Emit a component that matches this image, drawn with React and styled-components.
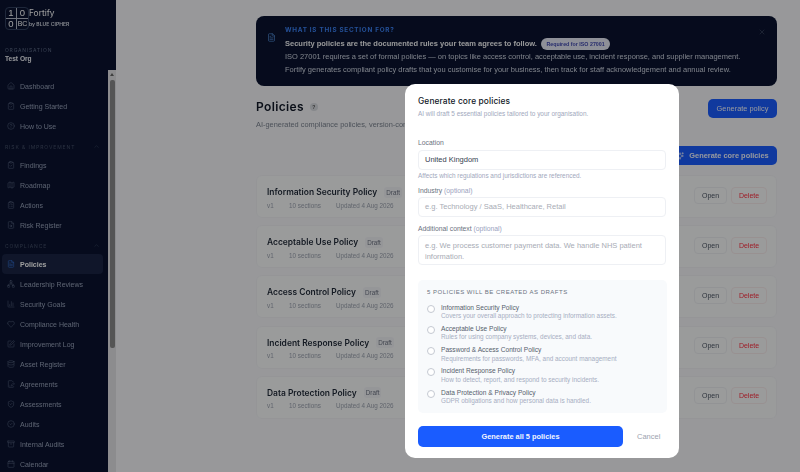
import React from 'react';
import styled, { createGlobalStyle } from 'styled-components';
import {
  Home, ClipboardCheck, CircleHelp, ChevronUp, Map, ClipboardList, FileSearch, FileText, Network,
  ChartColumn, Heart, SquarePen, Database, FileSignature, ShieldCheck, CircleCheck, Archive, Calendar,
  X, Sparkles,
} from 'lucide-react';

const GlobalStyle = createGlobalStyle`
  html, body { margin: 0; padding: 0; height: 100%; overflow: hidden; }
  body { font-family: "Liberation Sans", Arial, sans-serif; background: #f5f6f8; }
  * { box-sizing: border-box; }
`;

const Page = styled.div`
  display: flex;
  height: 472px;
  width: 800px;
  overflow: hidden;
`;

const Sidebar = styled.aside`
  width: 116px;
  flex-shrink: 0;
  background: #0a1330;
  display: flex;
  flex-direction: column;
  filter: blur(0.45px);
`;

const Brand = styled.div`
  display: flex;
  align-items: flex-start;
  gap: 0;
  padding: 7px 0 0 5px;
  height: 46px;
`;

const LogoGrid = styled.div`
  display: grid;
  grid-template-columns: 11px 11px;
  grid-template-rows: 11px 10px;
  width: 24px;
  height: 23px;
  border: 1px solid #33415f;
  border-radius: 4px;
  color: #fff;
  text-align: center;
  line-height: 10px;
`;

const LogoCell = styled.span`
  border-right: ${(p) => (p.$right ? '1px solid #b4bac8' : 'none')};
  border-bottom: ${(p) => (p.$bottom ? '1px solid #b4bac8' : 'none')};
  font-size: ${(p) => (p.$small ? '7px' : '9.5px')};
  font-weight: 500;
  white-space: nowrap;
`;

const BrandText = styled.div`
  display: flex;
  flex-direction: column;
  color: #fff;
  font-family: Inter, sans-serif;
`;

const BrandName = styled.span`
  font-size: 8.4px;
  line-height: 12px;
`;

const BrandSub = styled.span`
  margin-top: 1px;
  font-size: 5.1px;
  line-height: 8px;
  font-weight: 600;
  color: #d6dae4;
`;

const OrgBlock = styled.div`
  padding: 0 0 0 5px;
  height: 24px;
`;

const OrgLabel = styled.div`
  font-family: Inter, sans-serif;
  font-size: 5px;
  line-height: 8px;
  letter-spacing: 0.8px;
  color: #5f6b86;
`;

const OrgName = styled.div`
  font-size: 6.6px;
  line-height: 10px;
  font-weight: 700;
  color: #eef0f5;
`;

const SidebarBody = styled.div`
  flex: 1;
  display: flex;
  min-height: 0;
`;

const NavList = styled.nav`
  flex: 1;
  overflow: hidden;
  padding: 6px 5px 0 2px;
`;

const NavItem = styled.div`
  display: flex;
  align-items: center;
  gap: 5px;
  height: 20px;
  padding-left: 5px;
  border-radius: 4px;
  font-size: 7px;
  color: ${(p) => (p.$active ? '#ffffff' : '#97a1b8')};
  font-weight: ${(p) => (p.$active ? 700 : 400)};
  background: ${(p) => (p.$active ? '#1a2544' : 'transparent')};
  white-space: nowrap;

  svg {
    flex-shrink: 0;
    color: ${(p) => (p.$active ? '#3b82f6' : '#64708c')};
  }
`;

const NavSection = styled.div`
  display: flex;
  align-items: center;
  justify-content: space-between;
  height: 19px;
  padding: 2px 3px 0 3px;
  font-family: Inter, sans-serif;
  font-size: 5px;
  letter-spacing: 0.9px;
  color: #465069;
  white-space: nowrap;
`;

const ScrollTrack = styled.div`
  width: 8px;
  background: #e2e3e5;
  display: flex;
  flex-direction: column;
  align-items: center;
`;

const ScrollArrow = styled.div`
  width: 0;
  height: 0;
  margin: 3px 0 3px;
  border-left: 2.5px solid transparent;
  border-right: 2.5px solid transparent;
  border-bottom: 3px solid #666;
`;

const ScrollThumb = styled.div`
  width: 5px;
  height: 268px;
  margin-top: 1px;
  background: #8a8a8a;
  border-radius: 2px;
`;

const Main = styled.main`
  flex: 1;
  min-width: 0;
  padding: 16px 23px 0 140px;
  overflow: hidden;
  filter: blur(0.45px);
`;

const Banner = styled.section`
  display: flex;
  height: 70px;
  padding: 9px 10px 0 11px;
  background: #0a1330;
  border-radius: 8px;
  position: relative;
`;

const BannerIcon = styled.div`
  width: 16px;
  padding-top: 3px;
  color: #60a5fa;
  flex-shrink: 0;
`;

const BannerBody = styled.div`
  padding-left: 2px;
`;

const BannerEyebrow = styled.div`
  font-family: Inter, sans-serif;
  font-size: 6.3px;
  line-height: 10px;
  font-weight: 700;
  letter-spacing: 0.75px;
  color: #3b82f6;
`;

const BannerLead = styled.div`
  display: flex;
  align-items: center;
  gap: 4px;
  margin-top: 2px;
  height: 13px;
  font-size: 7.5px;
  font-weight: 700;
  color: #f3f4f6;
`;

const RequiredPill = styled.span`
  height: 12px;
  padding: 0 5.5px;
  border-radius: 6px;
  background: #e6e9f5;
  color: #3f48b0;
  font-size: 5.3px;
  line-height: 12px;
  font-weight: 700;
`;

const BannerText = styled.p`
  margin: 1px 0 0;
  font-size: 7.47px;
  line-height: 12.5px;
  color: #cdd3df;
  white-space: nowrap;
`;

const BannerClose = styled.div`
  position: absolute;
  top: 12px;
  right: 11px;
  color: #525c75;
  display: flex;
`;

const Header = styled.header`
  display: flex;
  justify-content: space-between;
  margin-top: 13px;
  height: 47px;
  align-items: flex-start;
`;

const TitleRow = styled.div`
  display: flex;
  align-items: center;
  gap: 6px;
`;

const Title = styled.h1`
  margin: 0;
  font-family: Inter, sans-serif;
  font-size: 12px;
  line-height: 16px;
  font-weight: 600;
  letter-spacing: 0.35px;
  color: #111827;
`;

const HelpDot = styled.span`
  width: 8px;
  height: 8px;
  border-radius: 50%;
  background: #d8dbe1;
  color: #555;
  font-size: 5px;
  line-height: 8px;
  text-align: center;
  font-weight: 700;
`;

const Subtitle = styled.p`
  margin: 5px 0 0;
  font-size: 7.4px;
  line-height: 10px;
  color: #7b8290;
  white-space: nowrap;
`;

const PrimaryButton = styled.button`
  display: flex;
  align-items: center;
  justify-content: center;
  gap: 5px;
  height: ${(p) => p.$height || '19px'};
  width: ${(p) => p.$width};
  border: 0;
  border-radius: 5px;
  padding: 0;
  background: #1a5cff;
  color: #f1f5ff;
  font-family: "Liberation Sans", Arial, sans-serif;
  font-size: 7.4px;
  font-weight: ${(p) => (p.$bold ? 700 : 400)};
`;

const Toolbar = styled.div`
  display: flex;
  justify-content: flex-end;
  height: 29px;
`;

const CardList = styled.div`
  display: flex;
  flex-direction: column;
  gap: 7.2px;
`;

const Card = styled.article`
  display: flex;
  justify-content: space-between;
  align-items: center;
  height: 43px;
  padding: 0 9px 0 10px;
  background: #f9fafb;
  border: 1px solid #f0f1f4;
  border-radius: 6px;
`;

const CardInfo = styled.div`
  margin-top: 2.5px;
`;

const CardTitleRow = styled.div`
  display: flex;
  align-items: center;
  gap: 7px;
`;

const CardTitle = styled.h3`
  margin: 0;
  font-family: Inter, sans-serif;
  font-size: 8.45px;
  line-height: 12px;
  font-weight: 600;
  color: #1f2937;
`;

const DraftTag = styled.span`
  font-size: 6.3px;
  line-height: 9px;
  color: #6b7280;
  padding: 1px 2px;
  background: #f1f2f6;
  border-radius: 3px;
`;

const CardMeta = styled.div`
  display: flex;
  margin-top: 2.5px;
  font-size: 6.3px;
  line-height: 9px;
  color: #9ca3af;
`;

const MetaItem = styled.span`
  width: ${(p) => p.$width};
`;

const CardActions = styled.div`
  display: flex;
  gap: 4px;
  margin-top: -3px;
`;

const ActionButton = styled.button`
  height: 17px;
  width: ${(p) => p.$width};
  padding: 0;
  background: #f9fafb;
  border: 1px solid ${(p) => (p.$danger ? '#f6eaea' : '#eceef1')};
  border-radius: 4px;
  font-family: "Liberation Sans", Arial, sans-serif;
  font-size: 7px;
  color: ${(p) => (p.$danger ? '#ff2f3f' : '#4b5563')};
`;

const Backdrop = styled.div`
  position: fixed;
  inset: 0;
  background: rgba(0, 0, 0, 0.38);
  z-index: 10;
`;

const Modal = styled.div`
  position: fixed;
  left: 405px;
  top: 84px;
  width: 274px;
  height: 374px;
  background: #fff;
  border-radius: 10px;
  z-index: 11;
  display: flex;
  flex-direction: column;
  padding: 0 13px;
`;

const ModalHead = styled.div`
  height: 50px;
  padding-top: 11px;
`;

const ModalTitle = styled.h2`
  margin: 0;
  font-family: Inter, sans-serif;
  font-size: 8.4px;
  line-height: 12px;
  font-weight: 500;
  letter-spacing: 0.1px;
  color: #111827;
`;

const ModalSub = styled.p`
  margin: 1px 0 0;
  font-size: 6.45px;
  line-height: 11px;
  color: #a1a8bd;
`;

const Field = styled.div`
  display: flex;
  flex-direction: column;
`;

const FieldLabel = styled.label`
  font-size: 6.8px;
  line-height: 10px;
  height: ${(p) => (p.$tall ? '12px' : '11px')};
  margin-top: ${(p) => p.$top || '0'};
  color: #6b7280;
`;

const Optional = styled.span`
  color: #9aa3c0;
`;

const TextBox = styled.div`
  height: ${(p) => p.$height || '20px'};
  width: 248px;
  padding: ${(p) => (p.$multi ? '5px 6px' : '0 6px')};
  border: 1px solid #eef0f4;
  border-radius: 4px;
  font-size: 7.5px;
  line-height: ${(p) => (p.$multi ? '10.6px' : '18px')};
  color: ${(p) => (p.$placeholder ? '#a8acb5' : '#374151')};
  background: #fff;
`;

const Hint = styled.div`
  margin-top: 1px;
  font-size: 6.4px;
  line-height: 10px;
  color: #a1a8bd;
`;

const DraftBox = styled.div`
  width: 249px;
  height: 133px;
  margin-top: 15px;
  padding: 8px 9px 0;
  background: #f8fafc;
  border-radius: 5px;
`;

const DraftHeading = styled.div`
  font-size: 6px;
  line-height: 9px;
  letter-spacing: 0.5px;
  color: #6b7280;
  margin-bottom: 4px;
`;

const DraftRow = styled.div`
  display: flex;
  align-items: flex-start;
  gap: 6px;
  height: 21.33px;
  padding-top: 2.5px;
`;

const Radio = styled.span`
  width: 8px;
  height: 8px;
  margin-top: 1px;
  flex-shrink: 0;
  border: 1px solid #c5c9d2;
  border-radius: 50%;
  background: #fff;
`;

const DraftName = styled.div`
  font-size: 6.6px;
  line-height: 8.5px;
  color: #565e6c;
`;

const DraftDesc = styled.div`
  font-size: 6.4px;
  line-height: 8.5px;
  color: #a7aec2;
`;

const ModalFooter = styled.div`
  display: flex;
  align-items: center;
  margin-top: 13px;
  gap: 14px;
`;

const CancelLink = styled.span`
  font-size: 7.5px;
  color: #9ca3af;
`;

const groups = [
  { items: [['Dashboard', Home], ['Getting Started', ClipboardCheck], ['How to Use', CircleHelp]] },
  {
    label: 'RISK & IMPROVEMENT',
    items: [['Findings', ClipboardCheck], ['Roadmap', Map], ['Actions', ClipboardList], ['Risk Register', FileSearch]],
  },
  {
    label: 'COMPLIANCE',
    items: [
      ['Policies', FileText, true], ['Leadership Reviews', Network], ['Security Goals', ChartColumn],
      ['Compliance Health', Heart], ['Improvement Log', SquarePen], ['Asset Register', Database],
      ['Agreements', FileSignature], ['Assessments', ShieldCheck], ['Audits', CircleCheck],
      ['Internal Audits', Archive], ['Calendar', Calendar],
    ],
  },
];

const policies = [
  'Information Security Policy', 'Acceptable Use Policy', 'Access Control Policy',
  'Incident Response Policy', 'Data Protection Policy',
];

const drafts = [
  ['Information Security Policy', 'Covers your overall approach to protecting information assets.'],
  ['Acceptable Use Policy', 'Rules for using company systems, devices, and data.'],
  ['Password & Access Control Policy', 'Requirements for passwords, MFA, and account management'],
  ['Incident Response Policy', 'How to detect, report, and respond to security incidents.'],
  ['Data Protection & Privacy Policy', 'GDPR obligations and how personal data is handled.'],
];

export default function App() {
  return (
    <Page>
      <GlobalStyle />
      <Sidebar>
        <Brand>
          <LogoGrid>
            <LogoCell $right $bottom>1</LogoCell>
            <LogoCell $bottom>0</LogoCell>
            <LogoCell $right>0</LogoCell>
            <LogoCell $small>BC</LogoCell>
          </LogoGrid>
          <BrandText>
            <BrandName>Fortify</BrandName>
            <BrandSub>by BLUE CIPHER</BrandSub>
          </BrandText>
        </Brand>
        <OrgBlock>
          <OrgLabel>ORGANISATION</OrgLabel>
          <OrgName>Test Org</OrgName>
        </OrgBlock>
        <SidebarBody>
          <NavList>
            {groups.map((group, i) => (
              <div key={i}>
                {group.label && (
                  <NavSection>
                    {group.label}
                    <ChevronUp size={7} strokeWidth={1.5} />
                  </NavSection>
                )}
                {group.items.map(([name, Icon, active]) => (
                  <NavItem key={name} $active={active}>
                    <Icon size={8} strokeWidth={1.4} />
                    {name}
                  </NavItem>
                ))}
              </div>
            ))}
          </NavList>
          <ScrollTrack>
            <ScrollArrow />
            <ScrollThumb />
          </ScrollTrack>
        </SidebarBody>
      </Sidebar>

      <Main>
        <Banner>
          <BannerIcon><FileText size={9} strokeWidth={1.5} /></BannerIcon>
          <BannerBody>
            <BannerEyebrow>WHAT IS THIS SECTION FOR?</BannerEyebrow>
            <BannerLead>
              Security policies are the documented rules your team agrees to follow.
              <RequiredPill>Required for ISO 27001</RequiredPill>
            </BannerLead>
            <BannerText>
              ISO 27001 requires a set of formal policies — on topics like access control, acceptable use, incident response, and supplier management.
              <br />
              Fortify generates compliant policy drafts that you customise for your business, then track for staff acknowledgement and annual review.
            </BannerText>
          </BannerBody>
          <BannerClose><X size={8} strokeWidth={1.5} /></BannerClose>
        </Banner>

        <Header>
          <div>
            <TitleRow>
              <Title>Policies</Title>
              <HelpDot>?</HelpDot>
            </TitleRow>
            <Subtitle>AI-generated compliance policies, version-controlled</Subtitle>
          </div>
          <PrimaryButton $width="69px">Generate policy</PrimaryButton>
        </Header>

        <Toolbar>
          <PrimaryButton $width="109px" $bold>
            <Sparkles size={8} />
            Generate core policies
          </PrimaryButton>
        </Toolbar>

        <CardList>
          {policies.map((name) => (
            <Card key={name}>
              <CardInfo>
                <CardTitleRow>
                  <CardTitle>{name}</CardTitle>
                  <DraftTag>Draft</DraftTag>
                </CardTitleRow>
                <CardMeta>
                  <MetaItem $width="22px">v1</MetaItem>
                  <MetaItem $width="47px">10 sections</MetaItem>
                  <MetaItem>Updated 4 Aug 2026</MetaItem>
                </CardMeta>
              </CardInfo>
              <CardActions>
                <ActionButton $width="33px">Open</ActionButton>
                <ActionButton $width="36px" $danger>Delete</ActionButton>
              </CardActions>
            </Card>
          ))}
        </CardList>
      </Main>

      <Backdrop />
      <Modal>
        <ModalHead>
          <ModalTitle>Generate core policies</ModalTitle>
          <ModalSub>AI will draft 5 essential policies tailored to your organisation.</ModalSub>
        </ModalHead>
        <Field>
          <FieldLabel $top="4px" $tall>Location</FieldLabel>
          <TextBox>United Kingdom</TextBox>
          <Hint>Affects which regulations and jurisdictions are referenced.</Hint>
        </Field>
        <Field>
          <FieldLabel $top="5px">Industry <Optional>(optional)</Optional></FieldLabel>
          <TextBox $placeholder>e.g. Technology / SaaS, Healthcare, Retail</TextBox>
        </Field>
        <Field>
          <FieldLabel $top="7px">Additional context <Optional>(optional)</Optional></FieldLabel>
          <TextBox $placeholder $multi $height="30px">
            e.g. We process customer payment data. We handle NHS patient information.
          </TextBox>
        </Field>
        <DraftBox>
          <DraftHeading>5 POLICIES WILL BE CREATED AS DRAFTS</DraftHeading>
          {drafts.map(([name, desc]) => (
            <DraftRow key={name}>
              <Radio />
              <div>
                <DraftName>{name}</DraftName>
                <DraftDesc>{desc}</DraftDesc>
              </div>
            </DraftRow>
          ))}
        </DraftBox>
        <ModalFooter>
          <PrimaryButton $width="205px" $height="21px" $bold>Generate all 5 policies</PrimaryButton>
          <CancelLink>Cancel</CancelLink>
        </ModalFooter>
      </Modal>
    </Page>
  );
}
